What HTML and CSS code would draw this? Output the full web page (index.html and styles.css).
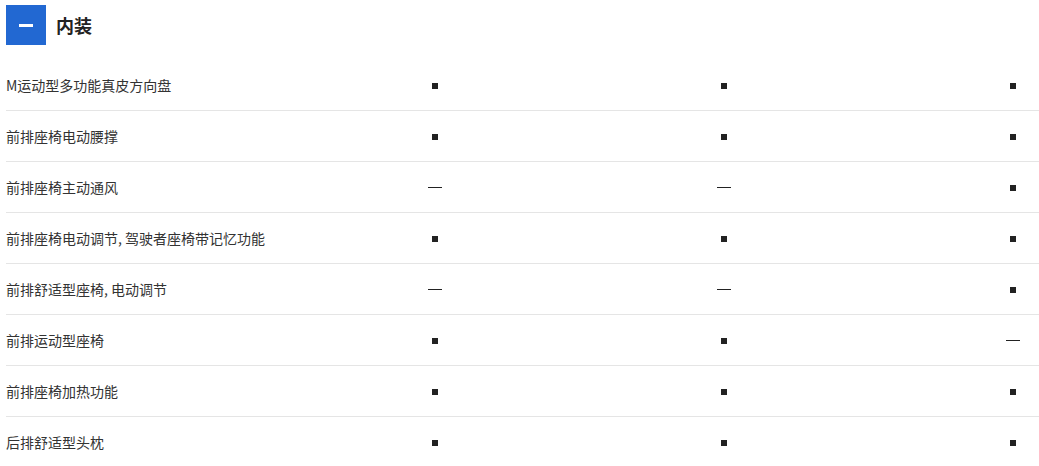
FILE: index.html
```html
<!DOCTYPE html>
<html lang="zh-CN">
<head>
<meta charset="utf-8">
<link rel="stylesheet" href="styles.css">
</head>
<body>
<div class="section">
  <div class="header">
    <div class="toggle"><span class="bar"></span></div>
    <h2 class="title">内装</h2>
  </div>
  <div class="rows">
    <div class="row"><div class="label">M运动型多功能真皮方向盘</div><div class="cell"><span class="sq"></span></div><div class="cell"><span class="sq"></span></div><div class="cell"><span class="sq"></span></div></div>
    <div class="row"><div class="label">前排座椅电动腰撑</div><div class="cell"><span class="sq"></span></div><div class="cell"><span class="sq"></span></div><div class="cell"><span class="sq"></span></div></div>
    <div class="row"><div class="label">前排座椅主动通风</div><div class="cell"><span class="dash"></span></div><div class="cell"><span class="dash"></span></div><div class="cell"><span class="sq"></span></div></div>
    <div class="row"><div class="label">前排座椅电动调节, 驾驶者座椅带记忆功能</div><div class="cell"><span class="sq"></span></div><div class="cell"><span class="sq"></span></div><div class="cell"><span class="sq"></span></div></div>
    <div class="row"><div class="label">前排舒适型座椅, 电动调节</div><div class="cell"><span class="dash"></span></div><div class="cell"><span class="dash"></span></div><div class="cell"><span class="sq"></span></div></div>
    <div class="row"><div class="label">前排运动型座椅</div><div class="cell"><span class="sq"></span></div><div class="cell"><span class="sq"></span></div><div class="cell"><span class="dash"></span></div></div>
    <div class="row"><div class="label">前排座椅加热功能</div><div class="cell"><span class="sq"></span></div><div class="cell"><span class="sq"></span></div><div class="cell"><span class="sq"></span></div></div>
    <div class="row"><div class="label">后排舒适型头枕</div><div class="cell"><span class="sq"></span></div><div class="cell"><span class="sq"></span></div><div class="cell"><span class="sq"></span></div></div>
  </div>
</div>
</body>
</html>
```

FILE: styles.css
```css
html, body {
  margin: 0;
  padding: 0;
  background: #fff;
  overflow: hidden;
}
body {
  font-family: "Noto Sans CJK SC", "Noto Sans", sans-serif;
  color: #333;
}
.section {
  padding: 5px 0 0 6px;
}
.header {
  display: flex;
  align-items: center;
  height: 40px;
  gap: 10px;
}
.toggle {
  width: 40px;
  height: 40px;
  background: #2268d2;
  display: flex;
  align-items: center;
  justify-content: center;
}
.bar {
  display: block;
  width: 14px;
  height: 3px;
  background: #fff;
}
.title {
  margin: 0;
  font-size: 18px;
  font-weight: bold;
  color: #222;
  line-height: 40px;
}
.rows {
  margin-top: 15px;
  overflow: hidden;
}
.row {
  display: grid;
  grid-template-columns: 284px 289px 289px 289px;
  width: 1151px;
  height: 50px;
  align-items: center;
  border-bottom: 1px solid #e5e5e5;
}
.label {
  font-size: 14px;
  color: #333;
  line-height: 20px;
}
.cell {
  display: flex;
  justify-content: center;
  align-items: center;
}
.sq {
  display: block;
  width: 6px;
  height: 6px;
  background: #222;
  margin-top: 2px;
}
.dash {
  display: block;
  width: 14px;
  height: 1px;
  background: #222;
  margin-top: 1px;
}
```
